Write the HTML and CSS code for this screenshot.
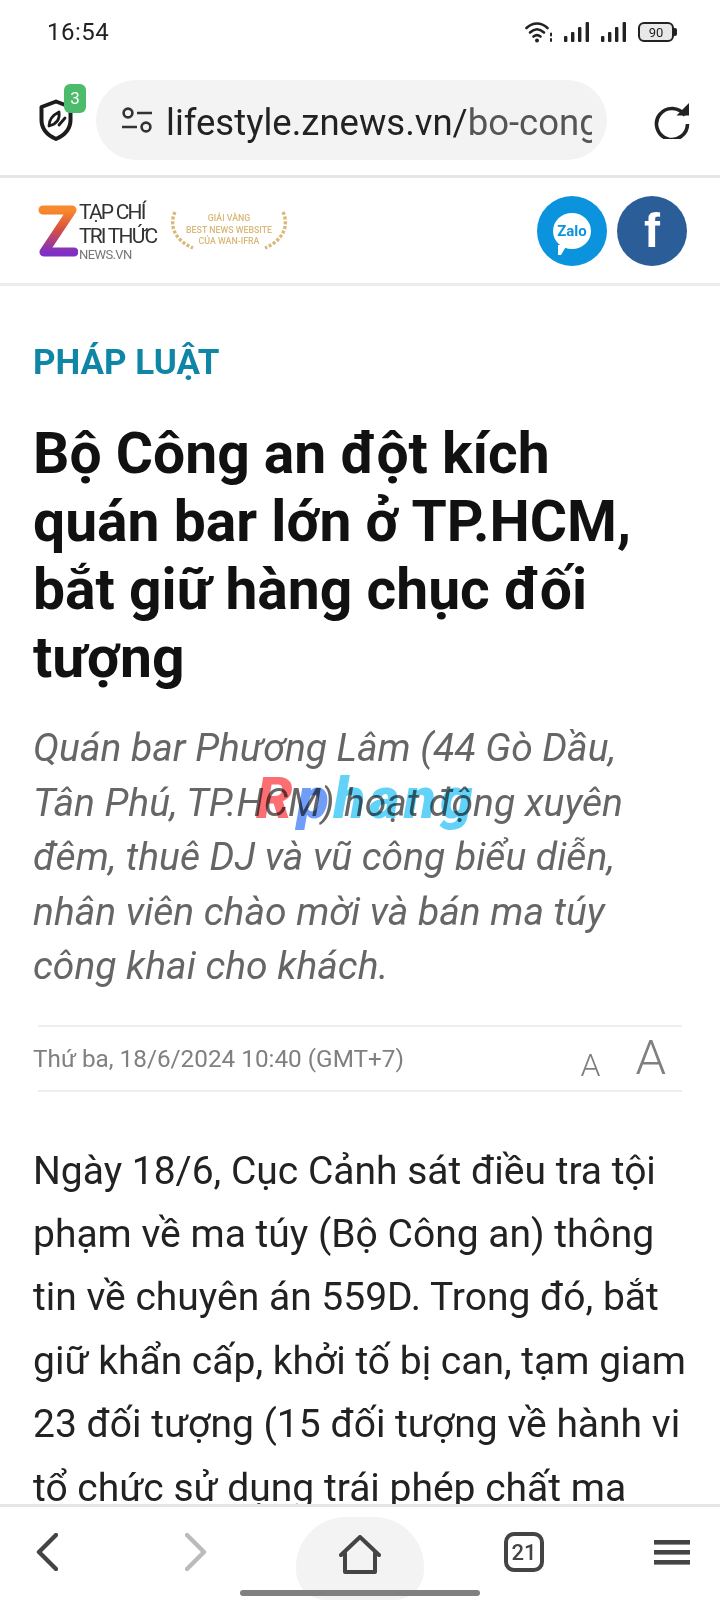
FILE: index.html
```html
<!DOCTYPE html>
<html lang="vi">
  <head>
    <meta charset="UTF-8" />
    <meta name="viewport" content="width=device-width, initial-scale=1.0" />
    <title>Bộ Công an đột kích quán bar lớn ở TP.HCM</title>
    <link rel="stylesheet" href="styles.css">
  </head>
  <body>
    <div class="phone">
      <div class="status-bar">
        <span class="time">16:54</span>
        <div class="status-icons">
          <svg width="28" height="22" viewBox="0 0 28 22" fill="none" stroke="#222" stroke-width="2.6" stroke-linecap="round">
            <path d="M1.5 7C8 1 16 1 22.5 7" />
            <path d="M5 11.5C10 7 14 7 19 11.5" />
            <path d="M8.5 15.5C11 13.5 13 13.5 15.5 15.5" />
            <circle cx="12" cy="19.5" r="2" fill="#222" stroke="none" />
            <path d="M26 12.5v2M26 18v2" stroke-width="2" />
          </svg>
          <svg width="26" height="20" viewBox="0 0 26 20" fill="#222">
            <rect x="0" y="14" width="3.4" height="6" rx="1" />
            <rect x="7" y="10" width="3.4" height="10" rx="1" />
            <rect x="14" y="5" width="3.4" height="15" rx="1" />
            <rect x="21.6" y="0" width="3.4" height="20" rx="1" />
          </svg>
          <svg width="26" height="20" viewBox="0 0 26 20" fill="#222">
            <rect x="0" y="14" width="3.4" height="6" rx="1" />
            <rect x="7" y="10" width="3.4" height="10" rx="1" />
            <rect x="14" y="5" width="3.4" height="15" rx="1" />
            <rect x="21.6" y="0" width="3.4" height="20" rx="1" />
          </svg>
          <div class="battery"><span class="battery-level">90</span></div>
        </div>
      </div>

      <div class="browser-bar">
        <div class="shield">
          <svg width="34" height="42" viewBox="0 0 34 42" fill="none">
            <path d="M17 2.5L31.5 8V21C31.5 30 26 36 17 40C8 36 2.5 30 2.5 21V8Z" stroke="#1c1c1c" stroke-width="4" stroke-linejoin="round" />
            <path d="M10 27C10 20 14 16 20 13C21 20 18 25 10 27ZM20 26L26 19" stroke="#1c1c1c" stroke-width="2.8" stroke-linecap="round" stroke-linejoin="round" />
          </svg>
          <span class="badge">3</span>
        </div>
        <div class="url-pill">
          <svg width="32" height="28" viewBox="0 0 32 28" fill="none" stroke="#333" stroke-width="2.6">
            <circle cx="7" cy="7" r="4.4" />
            <path d="M16 7H31M1 21H16" />
            <circle cx="25" cy="21" r="4.4" />
          </svg>
          <span class="url-text">lifestyle.znews.vn/<span class="url-path">bo-cong-an-dot-kich</span></span>
        </div>
        <svg class="reload" width="38" height="38" viewBox="0 0 38 38" fill="none" stroke="#222" stroke-width="3.6">
          <path d="M31 14.5A15.5 15.5 0 1 0 33.5 23" />
          <path d="M35 2V14.5H22.5Z" fill="#222" stroke="none" />
        </svg>
      </div>

      <header class="site-header">
        <div class="brand">
          <svg class="z-logo" width="40" height="54" viewBox="0 0 40 54" fill="none">
            <defs>
              <linearGradient id="zGrad" x1="0" y1="0" x2="0" y2="1">
                <stop offset="0" stop-color="#f98a2c" />
                <stop offset="0.45" stop-color="#d9503f" />
                <stop offset="1" stop-color="#7f2fc4" />
              </linearGradient>
            </defs>
            <path d="M5 6H34L6 48H36" stroke="url(#zGrad)" stroke-width="9" stroke-linecap="round" stroke-linejoin="round" />
          </svg>
          <div class="brand-text">
            <span>TẠP CHÍ</span>
            <span>TRI THỨC</span>
            <span class="brand-small">NEWS.VN</span>
          </div>
        </div>
        <div class="award">
          <svg class="laurel" width="24" height="40" viewBox="0 0 24 40" fill="none" stroke="#d9b878" stroke-width="3.4">
            <path d="M5 1C-1 14 4 29 23 37" stroke-dasharray="3 1.8" />
          </svg>
          <div class="award-text">
            <span>GIẢI VÀNG</span>
            <span>BEST NEWS WEBSITE</span>
            <span>CỦA WAN-IFRA</span>
          </div>
          <svg class="laurel" width="24" height="40" viewBox="0 0 24 40" fill="none" stroke="#d9b878" stroke-width="3.4">
            <path d="M19 1C25 14 20 29 1 37" stroke-dasharray="3 1.8" />
          </svg>
        </div>
        <div class="socials">
          <div class="social zalo">
            <div class="zalo-bubble">Zalo</div>
          </div>
          <div class="social facebook">f</div>
        </div>
      </header>

      <main class="article">
        <div class="category">PHÁP LUẬT</div>
        <h1 class="title">Bộ Công an đột kích quán bar lớn ở TP.HCM, bắt giữ hàng chục đối tượng</h1>
        <p class="sapo">Quán bar Phương Lâm (44 Gò Dầu, Tân Phú, TP.HCM) hoạt động xuyên đêm, thuê DJ và vũ công biểu diễn, nhân viên chào mời và bán ma túy công khai cho khách.</p>
        <div class="meta">
          <span class="date">Thứ ba, 18/6/2024 10:40 (GMT+7)</span>
          <div class="font-size">
            <span class="a-small">A</span>
            <span class="a-big">A</span>
          </div>
        </div>
        <p class="body-text">Ngày 18/6, Cục Cảnh sát điều tra tội phạm về ma túy (Bộ Công an) thông tin về chuyên án 559D. Trong đó, bắt giữ khẩn cấp, khởi tố bị can, tạm giam 23 đối tượng (15 đối tượng về hành vi tổ chức sử dụng trái phép chất ma túy)</p>
      </main>

      <div class="watermark"><span class="wm-red">R</span><span class="wm-blue">p</span><span class="wm-cyan">hang</span></div>

      <nav class="bottom-nav">
        <svg class="nav-back" width="22" height="38" viewBox="0 0 22 38" fill="none" stroke="#444" stroke-width="4.4" stroke-linecap="round" stroke-linejoin="round">
          <path d="M20 2L3 19L20 36" />
        </svg>
        <svg class="nav-forward" width="22" height="38" viewBox="0 0 22 38" fill="none" stroke="#bbb" stroke-width="4.4" stroke-linecap="round" stroke-linejoin="round">
          <path d="M2 2L19 19L2 36" />
        </svg>
        <div class="home-btn">
          <svg width="42" height="40" viewBox="0 0 42 40" fill="none" stroke="#444" stroke-width="4" stroke-linecap="round" stroke-linejoin="round">
            <path d="M2 20L21 2L40 20M6 18V37H36V18" />
          </svg>
        </div>
        <div class="tabs-btn">21</div>
        <svg class="nav-menu" width="36" height="25" viewBox="0 0 36 25" fill="#444">
          <rect x="0" y="0" width="36" height="4.6" />
          <rect x="0" y="10" width="36" height="4.6" />
          <rect x="0" y="20" width="36" height="4.6" />
        </svg>
        <div class="home-indicator"></div>
      </nav>
    </div>
  </body>
</html>
```

FILE: styles.css
```css
* {
  margin: 0;
  padding: 0;
  box-sizing: border-box;
}

body {
  font-family: Roboto, "Liberation Sans", sans-serif;
  background-color: #fff;
  color: #222;
}

.phone {
  position: relative;
  width: 720px;
  height: 1600px;
  display: flex;
  flex-direction: column;
  overflow: hidden;
  background-color: #fff;
}

/* status bar */
.status-bar {
  height: 64px;
  flex: none;
  display: flex;
  justify-content: space-between;
  align-items: center;
  padding: 0 46px 0 47px;
}

.time {
  font-size: 24px;
  color: #222;
  letter-spacing: 0.5px;
}

.status-icons {
  display: flex;
  align-items: center;
  gap: 11px;
}

.battery {
  position: relative;
  width: 36px;
  height: 20px;
  border: 2px solid #222;
  border-radius: 6px;
  background-color: #e8e8e8;
  display: flex;
  align-items: center;
  justify-content: center;
}

.battery::after {
  content: "";
  position: absolute;
  right: -5px;
  top: 4px;
  width: 3px;
  height: 8px;
  background-color: #222;
  border-radius: 0 2px 2px 0;
}

.battery-level {
  font-size: 13px;
  line-height: 1;
  color: #222;
}

/* browser address bar */
.browser-bar {
  height: 114px;
  flex: none;
  display: flex;
  align-items: center;
  padding: 0 30px 0 39px;
  border-bottom: 3px solid #e6e6e6;
}

.shield {
  position: relative;
  width: 57px;
  height: 42px;
  flex: none;
}

.badge {
  position: absolute;
  left: 25px;
  top: -15px;
  width: 22px;
  height: 29px;
  background-color: #4cbb6c;
  color: #fff;
  font-size: 17px;
  border-radius: 6px;
  display: flex;
  align-items: center;
  justify-content: center;
}

.url-pill {
  width: 511px;
  height: 80px;
  flex: none;
  display: flex;
  align-items: center;
  gap: 13px;
  padding: 0 15px 0 25px;
  background-color: #f3f3f3;
  border-radius: 40px;
}

.url-pill svg {
  flex: none;
}

.url-text {
  font-size: 36.5px;
  padding-top: 5px;
  color: #222;
  white-space: nowrap;
  overflow: hidden;
  flex: 1;
}

.url-path {
  color: #555;
}

.reload {
  margin-left: 47px;
  flex: none;
}

/* site header */
.site-header {
  height: 108px;
  flex: none;
  display: flex;
  align-items: center;
  padding: 0 33px 0 38px;
  border-bottom: 3px solid #ececec;
}

.brand {
  display: flex;
  align-items: center;
}

.z-logo {
  flex: none;
}

.brand-text {
  display: flex;
  flex-direction: column;
  font-size: 21px;
  line-height: 24px;
  color: #333;
  letter-spacing: -1.8px;
  width: 76px;
  white-space: nowrap;
  margin-left: 1px;
}

.brand-small {
  font-size: 13px;
  line-height: 14px;
  letter-spacing: -0.6px;
  color: #777;
}

.award {
  display: flex;
  align-items: center;
  margin-left: 15px;
}

.award-text {
  display: flex;
  flex-direction: column;
  align-items: center;
  width: 70px;
  font-size: 8.8px;
  line-height: 11.5px;
  font-weight: 500;
  color: #d9b878;
  white-space: nowrap;
}

.socials {
  display: flex;
  gap: 10px;
  margin-left: auto;
}

.social {
  width: 70px;
  height: 70px;
  border-radius: 50%;
  display: flex;
  align-items: center;
  justify-content: center;
  color: #fff;
}

.zalo {
  background-color: #0c93de;
}

.zalo-bubble {
  position: relative;
  width: 38px;
  height: 36px;
  border-radius: 50%;
  background-color: #fff;
  color: #0c93de;
  font-size: 15px;
  font-weight: 700;
  display: flex;
  align-items: center;
  justify-content: center;
}

.zalo-bubble::after {
  content: "";
  position: absolute;
  left: 5px;
  bottom: -6px;
  border-left: 3px solid #fff;
  border-right: 6px solid transparent;
  border-top: 10px solid #fff;
}

.facebook {
  background-color: #2b5d98;
  font-family: "Liberation Sans", sans-serif;
  font-size: 48px;
  font-weight: 700;
}

/* article */
.article {
  flex: 1;
  min-height: 0;
  overflow: hidden;
  padding: 56px 33px 0;
}

.category {
  font-size: 35px;
  line-height: 42px;
  font-weight: 700;
  color: #0f86a5;
}

.title {
  max-width: 615px;
  margin-top: 36px;
  font-size: 57px;
  line-height: 68px;
  font-weight: 700;
  color: #111;
}

.sapo {
  max-width: 615px;
  margin-top: 29px;
  font-size: 39px;
  line-height: 54.5px;
  font-style: italic;
  color: #666;
}

.meta {
  margin: 31px 5px 0;
  height: 67px;
  display: flex;
  align-items: center;
  justify-content: space-between;
  border-top: 2px solid #eee;
  border-bottom: 2px solid #eee;
}

.date {
  margin-left: -5px;
  font-size: 24.3px;
  color: #808080;
}

.font-size {
  display: flex;
  align-items: flex-end;
  gap: 35px;
  color: #808080;
  font-weight: 300;
  margin-right: 16px;
}

.a-small {
  font-size: 32px;
  line-height: 38px;
}

.a-big {
  font-size: 49px;
  line-height: 52px;
}

.body-text {
  margin-top: 48px;
  font-size: 39px;
  line-height: 63.4px;
  color: #222;
}

/* watermark over the text */
.watermark {
  position: absolute;
  left: 256px;
  top: 763px;
  font-size: 58px;
  line-height: 70px;
  font-weight: 900;
  font-style: italic;
  letter-spacing: 4.5px;
  mix-blend-mode: multiply;
}

.wm-red {
  color: #fb6f73;
}

.wm-blue {
  color: #6f9df8;
}

.wm-cyan {
  color: #62d2f8;
}

/* bottom nav */
.bottom-nav {
  position: relative;
  height: 96px;
  flex: none;
  display: flex;
  align-items: flex-start;
  padding: 10px 0 0 36px;
  background-color: #fff;
  border-top: 3px solid #e6e6e6;
}

.nav-back,
.nav-forward {
  margin-top: 16px;
}

.nav-forward {
  margin-left: 127px;
}

.home-btn {
  width: 128px;
  height: 83px;
  margin-left: 89px;
  border-radius: 50px 50px 30px 30px;
  background-color: #f3f3f3;
  display: flex;
  align-items: center;
  justify-content: center;
  padding-bottom: 8px;
}

.tabs-btn {
  width: 40px;
  height: 40px;
  margin-top: 15px;
  margin-left: 80px;
  border: 4px solid #444;
  border-radius: 10px;
  font-size: 22px;
  font-weight: 500;
  color: #444;
  display: flex;
  align-items: center;
  justify-content: center;
}

.nav-menu {
  margin-top: 23px;
  margin-left: 110px;
}

.home-indicator {
  position: absolute;
  left: 240px;
  bottom: 4px;
  width: 240px;
  height: 6px;
  border-radius: 3px;
  background-color: #808080;
}
```
